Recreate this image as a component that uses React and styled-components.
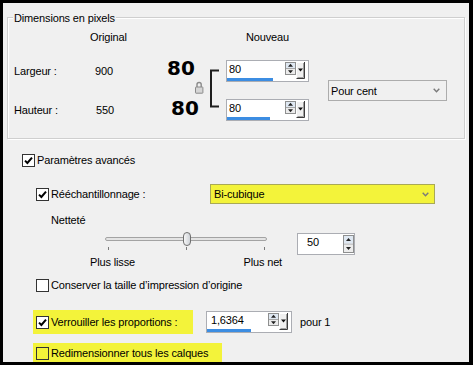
import React from 'react';
import styled, { createGlobalStyle } from 'styled-components';

const HL = '#f3f33a';

const Global = createGlobalStyle`
  html, body { margin: 0; padding: 0; background: #000; }
  body { font-family: "Liberation Sans", Arial, sans-serif; font-size: 11px; color: #000; }
  #root { width: 473px; height: 365px; overflow: hidden; }
`;

const Frame = styled.div`
  margin: 3px 0 0 3px;
  width: 466px;
  height: 359px;
  background: #f0f0f0;
  overflow: hidden;
  display: flex;
  flex-direction: column;
  letter-spacing: -0.15px;
`;

const GroupBox = styled.div`
  margin: 14px 0 0 4px;
  width: 458px;
  height: 122px;
  box-sizing: border-box;
  border: 1px solid #cfcfcf;
  box-shadow: 1px 1px 0 #fff, inset 1px 1px 0 #fff;
  display: flex;
  flex-direction: column;
  flex: none;
`;

const Legend = styled.div`
  margin: -6px 0 0 5px;
  padding: 0 1px;
  width: fit-content;
  line-height: 13px;
  background: #f0f0f0;
`;

const Grid = styled.div`
  display: grid;
  grid-template-columns: 78px 70px 38px 32px 83px 1fr;
  grid-template-rows: 14px 24px 24px;
  row-gap: 15px;
  margin-top: 5px;
`;

const Cell = styled.div`
  grid-column: ${p => p.$col};
  grid-row: ${p => p.$row};
  padding-left: ${p => p.$indent || 0}px;
  line-height: 14px;
  align-self: center;
  white-space: nowrap;
  text-align: ${p => (p.$center ? 'center' : 'left')};
`;

const BigCol = styled.div`
  grid-column: 3;
  grid-row: 2 / 4;
  display: flex;
  flex-direction: column;
  font-family: "DejaVu Sans", Verdana, sans-serif;
  font-weight: bold;
  font-size: 20px;
  line-height: 20px;
  letter-spacing: 0;
`;

const BigNum = styled.div`
  margin-top: ${p => p.$top}px;
  padding-left: ${p => p.$indent}px;
  white-space: nowrap;
`;

const LinkCol = styled.div`
  grid-column: 4;
  grid-row: 2 / 4;
  padding-top: 10px;
`;

const ComboCell = styled.div`
  grid-column: 6;
  grid-row: 2 / 4;
  align-self: center;
  padding-left: 19px;
`;

const Combo = styled.div`
  display: flex;
  align-items: center;
  justify-content: space-between;
  width: ${p => p.$w}px;
  height: ${p => p.$h}px;
  box-sizing: border-box;
  border: 1px solid ${p => (p.$hl ? '#a9a955' : '#acacac')};
  background: ${p => (p.$hl ? HL : '#f0f0f0')};
  padding: 0 ${p => p.$pr}px 0 ${p => p.$pl}px;
  white-space: nowrap;
  flex: none;
`;

const SpinWrap = styled.div`
  display: flex;
  align-items: flex-start;
  width: ${p => p.$w}px;
  height: 22px;
  box-sizing: border-box;
  border: 1px solid #abadb3;
  background: #fff;
  flex: none;
`;

const SpinField = styled.div`
  flex: 1;
  height: 100%;
  display: flex;
  flex-direction: column;
  justify-content: space-between;
  padding-left: ${p => p.$pl}px;
  box-sizing: border-box;
`;

const SpinText = styled.div`
  line-height: 17px;
`;

const ValueBar = styled.div`
  height: 3px;
  margin: 0 0 0 -${p => p.$pl}px;
  background: #3c8de2;
`;

const ArrowSlot = styled.div`
  margin: 1px ${p => (p.$drop ? 3 : 0)}px 0 0;
  display: flex;
`;

const Section = styled.div`
  display: flex;
  align-items: center;
  margin-top: ${p => p.$top}px;
  padding-left: ${p => p.$indent}px;
  height: ${p => p.$h}px;
  flex: none;
`;

const CheckLabel = styled.label`
  display: flex;
  align-items: center;
  gap: 2px;
  line-height: 14px;
  white-space: nowrap;
  width: ${p => (p.$w ? `${p.$w}px` : 'auto')};
  flex: none;
`;

const Box = styled.span`
  width: 13px;
  height: 13px;
  box-sizing: border-box;
  border: 1px solid #333;
  background: ${p => (p.$clear ? 'transparent' : '#fff')};
  display: inline-flex;
  align-items: center;
  justify-content: center;
  flex: none;
`;

const Highlight = styled.div`
  display: flex;
  align-items: ${p => (p.$top ? 'flex-start' : 'center')};
  width: ${p => p.$w}px;
  height: 24px;
  box-sizing: border-box;
  padding: ${p => (p.$top ? '3px 0 0 3px' : '0 0 0 3px')};
  background: ${HL};
  flex: none;
`;

const Text = styled.span`
  line-height: 14px;
  white-space: nowrap;
  margin-left: ${p => p.$ml || 0}px;
`;

const SpinSlot = styled.div`
  margin-left: ${p => p.$ml}px;
  display: flex;
`;

const SliderBox = styled.div`
  position: relative;
  width: 162px;
  height: 22px;
  display: flex;
  flex-direction: column;
  flex: none;
  margin-right: 30px;
  align-self: flex-start;
`;

const Track = styled.div`
  margin-top: 4px;
  height: 4px;
  box-sizing: border-box;
  border: 1px solid #a3a3a3;
  border-radius: 3px;
  background: #e4e4e4;
`;

const Ticks = styled.div`
  margin-top: 6px;
  display: flex;
  justify-content: space-between;
  padding: 0 2px 0 3px;
`;

const Tick = styled.span`
  width: 1px;
  height: 3px;
  background: #7a7a7a;
`;

const Thumb = styled.div`
  position: absolute;
  top: -1px;
  width: 8px;
  height: 14px;
  margin-left: -4px;
  box-sizing: border-box;
  border: 1px solid #6f6f6f;
  border-radius: 4px;
  background: linear-gradient(90deg, #f6f6f6, #cfd3d8);
`;

const ScaleLabels = styled.div`
  display: flex;
  justify-content: space-between;
  width: 192px;
  margin-left: 87px;
  line-height: 14px;
  flex: none;
`;

const Check = () => (
  <svg width="9" height="9" viewBox="0 0 9 9">
    <path d="M1 4.6 L3.4 7 L8 1.6" fill="none" stroke="#000" strokeWidth="2" />
  </svg>
);

const CheckBox = ({ checked, clear }) => <Box $clear={clear}>{checked && <Check />}</Box>;

const Chevron = () => (
  <svg width="7" height="5" viewBox="0 0 7 5">
    <polyline points="0.7,0.8 3.5,3.8 6.3,0.8" fill="none" stroke="#7a7a7a" strokeWidth="1.4" />
  </svg>
);

const SpinButtons = ({ h }) => (
  <svg width="11" height={h} viewBox={`0 0 11 ${h}`} style={{ flex: 'none', display: 'block' }}>
    <rect x="0.5" y="0.5" width="10" height={h - 1} fill="#ececec" stroke="#8e8f8f" />
    <line x1="1" y1={h / 2} x2="10" y2={h / 2} stroke="#a8a8a8" />
    <rect x="1" y="1" width="9" height={h / 2 - 1.5} fill="#dfe8f2" />
    <polygon points={`3,${h / 4 + 1.5} 8,${h / 4 + 1.5} 5.5,${h / 4 - 1.5}`} fill="#222" />
    <polygon points={`3,${(3 * h) / 4 - 1.5} 8,${(3 * h) / 4 - 1.5} 5.5,${(3 * h) / 4 + 1.5}`} fill="#222" />
  </svg>
);

const DropButton = () => (
  <svg width="9" height="17" viewBox="0 0 9 17" style={{ flex: 'none', display: 'block' }}>
    <rect x="0" y="0" width="9" height="17" fill="#f0f0f0" />
    <path d="M0.5 16.5 V0.5 H8" fill="none" stroke="#ffffff" />
    <path d="M0.5 16.5 H8.5 V0" fill="none" stroke="#3c3c3c" />
    <path d="M1.5 15.5 H7.5 V1" fill="none" stroke="#a0a0a0" />
    <polygon points="2,6.5 7,6.5 4.5,9.5" fill="#111" />
  </svg>
);

const Spin = ({ w, value, bar, drop = true, pl = 2, btnH = 13 }) => (
  <SpinWrap $w={w}>
    <SpinField $pl={pl}>
      <SpinText>{value}</SpinText>
      {bar ? <ValueBar $pl={pl} style={{ width: bar }} /> : null}
    </SpinField>
    <ArrowSlot $drop={drop}>
      <SpinButtons h={btnH} />
      {drop && <DropButton />}
    </ArrowSlot>
  </SpinWrap>
);

const LinkMark = () => (
  <svg width="32" height="40" viewBox="0 0 32 40" style={{ display: 'block' }}>
    <path d="M25 1.5 H17 V37.5 H25" fill="none" stroke="#1e1e1e" strokeWidth="2" />
    <path d="M3 18 V15.6 A2.1 2.1 0 0 1 7.2 15.6 V18" fill="none" stroke="#8a8a8a" strokeWidth="1.4" />
    <rect x="1.5" y="18" width="7.4" height="6.2" rx="0.5" fill="#d6d6d6" stroke="#8a8a8a" />
  </svg>
);

export default function App() {
  const sharp = 50;
  return (
    <>
      <Global />
      <Frame>
        <GroupBox>
          <Legend>Dimensions en pixels</Legend>
          <Grid>
            <Cell $col={2} $row={1} $indent={4}>Original</Cell>
            <Cell $col={5} $row={1} $center>Nouveau</Cell>
            <Cell $col={1} $row={2} $indent={6}>Largeur :</Cell>
            <Cell $col={2} $row={2} $indent={9}>900</Cell>
            <Cell $col={1} $row={3} $indent={6}>Hauteur :</Cell>
            <Cell $col={2} $row={3} $indent={10}>550</Cell>
            <BigCol>
              <BigNum $top={-1} $indent={11}>80</BigNum>
              <BigNum $top={20} $indent={15}>80</BigNum>
            </BigCol>
            <LinkCol>
              <LinkMark />
            </LinkCol>
            <Cell $col={5} $row={2}>
              <Spin w={83} value="80" bar={46} />
            </Cell>
            <Cell $col={5} $row={3}>
              <Spin w={83} value="80" bar={43} />
            </Cell>
            <ComboCell>
              <Combo $w={119} $h={21} $pl={2} $pr={6}>
                <span>Pour cent</span>
                <Chevron />
              </Combo>
            </ComboCell>
          </Grid>
        </GroupBox>

        <Section $top={14} $indent={19} $h={14}>
          <CheckLabel>
            <CheckBox checked />
            <Text>Paramètres avancés</Text>
          </CheckLabel>
        </Section>

        <Section $top={17} $indent={33} $h={20}>
          <CheckLabel $w={174}>
            <CheckBox checked />
            <Text>Rééchantillonnage :</Text>
          </CheckLabel>
          <Combo $w={225} $h={20} $pl={3} $pr={5} $hl>
            <span>Bi-cubique</span>
            <Chevron />
          </Combo>
        </Section>

        <Section $top={9} $indent={48} $h={14}>
          <Text>Netteté</Text>
        </Section>

        <Section $top={6} $indent={102} $h={22}>
          <SliderBox>
            <Track />
            <Ticks>
              <Tick />
              <Tick />
              <Tick />
            </Ticks>
            <Thumb style={{ left: `${(sharp / 100) * 162 + 1}px` }} />
          </SliderBox>
          <Spin w={58} value="50" drop={false} pl={9} btnH={18} />
        </Section>

        <ScaleLabels>
          <span>Plus lisse</span>
          <span>Plus net</span>
        </ScaleLabels>

        <Section $top={9} $indent={33} $h={14}>
          <CheckLabel>
            <CheckBox />
            <Text>Conserver la taille d’impression d’origine</Text>
          </CheckLabel>
        </Section>

        <Section $top={18} $indent={30} $h={24}>
          <Highlight $w={160}>
            <CheckLabel>
              <CheckBox checked />
              <Text>Verrouiller les proportions :</Text>
            </CheckLabel>
          </Highlight>
          <SpinSlot $ml={13}>
            <Spin w={86} value="1,6364" bar={44} pl={4} />
          </SpinSlot>
          <Text $ml={8}>pour 1</Text>
        </Section>

        <Section $top={9} $indent={30} $h={24}>
          <Highlight $w={189} $top>
            <CheckLabel>
              <CheckBox clear />
              <Text>Redimensionner tous les calques</Text>
            </CheckLabel>
          </Highlight>
        </Section>
      </Frame>
    </>
  );
}
